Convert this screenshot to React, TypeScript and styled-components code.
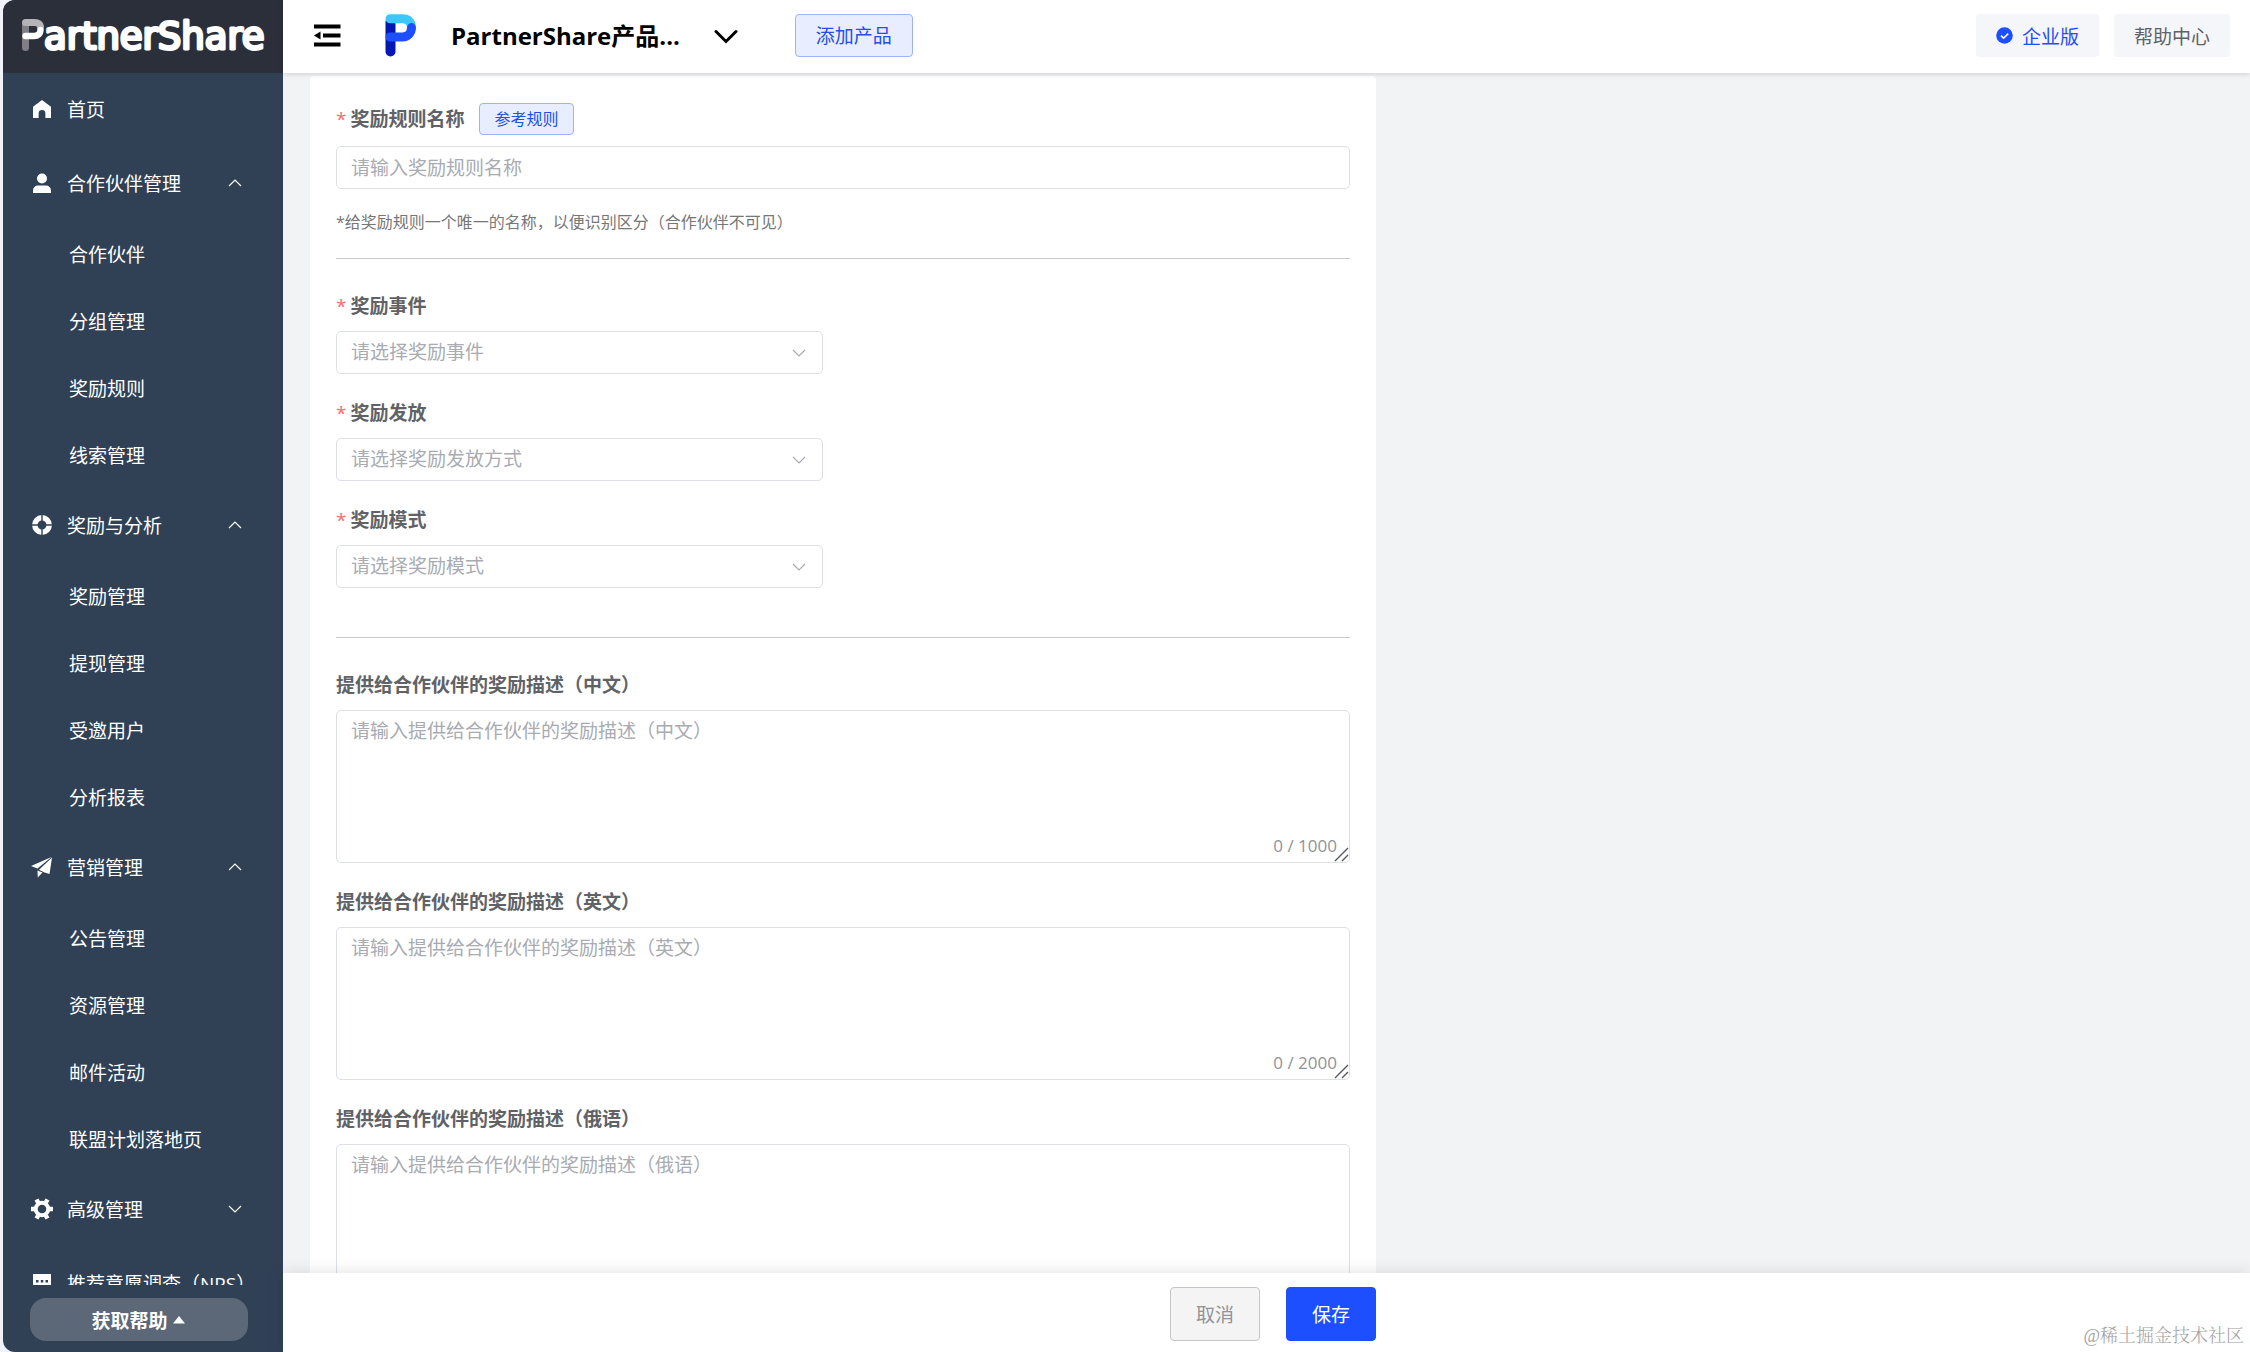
import React from 'react';
import styled, { createGlobalStyle } from 'styled-components';

const GlobalStyle = createGlobalStyle`
  * { box-sizing: border-box; }
  body {
    margin: 0;
    background: #eff3f9;
    font-family: "Open Sans", "Noto Sans CJK SC", sans-serif;
    font-size: 19px;
    color: #606266;
  }
  button, input, select, textarea { font: inherit; }
  svg { flex: none; }
`;

const Shell = styled.div`
  display: flex;
  height: 100vh;
  padding-left: 3px;
  overflow: hidden;
`;

/* ---------- sidebar ---------- */

const Sidebar = styled.aside`
  display: flex;
  flex: none;
  flex-direction: column;
  width: 280px;
  overflow: hidden;
  background: #304156;
  border-radius: 12px 0 0 12px;
`;

const Brand = styled.div`
  display: flex;
  flex: none;
  align-items: center;
  height: 73px;
  padding-left: 18px;
  background: #2b2f3a;
`;

const Menu = styled.nav`
  flex: 1;
  min-height: 0;
  overflow: hidden;
`;

const MenuItem = styled.button`
  display: flex;
  align-items: center;
  gap: 14px;
  width: 100%;
  height: 74px;
  padding: 0 41px 2px 28px;
  border: 0;
  background: none;
  color: #fff;
  text-align: left;
  white-space: nowrap;
  cursor: pointer;
`;

const MenuLabel = styled.span`
  flex: 1;
`;

const SubItem = styled.a`
  display: flex;
  align-items: center;
  height: 67px;
  padding: 0 0 2px 66px;
  color: #fff;
  text-decoration: none;
`;

const SidebarFooter = styled.div`
  flex: none;
  padding: 13px 35px 11px 27px;
`;

const HelpButton = styled.button`
  display: flex;
  align-items: center;
  justify-content: center;
  gap: 5px;
  width: 100%;
  height: 43px;
  padding: 0 8px 0 6px;
  border: 0;
  border-radius: 16px;
  background: #5c6778;
  color: #fff;
  font-weight: 700;
  cursor: pointer;
`;

/* ---------- header ---------- */

const Page = styled.div`
  display: flex;
  flex: 1;
  flex-direction: column;
  min-width: 0;
  background: #f1f3f5;
`;

const Header = styled.header`
  z-index: 1;
  display: flex;
  flex: none;
  align-items: center;
  height: 73px;
  padding: 0 20px 2px 31px;
  background: #fff;
  box-shadow: 0 1px 5px rgba(0, 0, 0, 0.16);
`;

const IconButton = styled.button`
  display: flex;
  padding: 0;
  border: 0;
  background: none;
  color: #000;
  cursor: pointer;
`;

const Product = styled.div`
  display: flex;
  align-items: center;
  gap: 34px;
  margin: 0 57px 0 43px;
`;

const ProductName = styled.h1`
  margin: 0;
  color: #000;
  font-size: 24px;
  font-weight: 700;
  line-height: 32px;
  white-space: nowrap;
`;

const OutlineButton = styled.button<{ $small?: boolean }>`
  height: ${(p) => (p.$small ? 32 : 43)}px;
  padding: 0 ${(p) => (p.$small ? 14 : 20)}px;
  border: 1px solid #9db2f7;
  border-radius: 4px;
  background: #e8edff;
  color: #2250e6;
  font-size: ${(p) => (p.$small ? 16 : 19)}px;
  line-height: 24px;
  cursor: pointer;
`;

const HeaderActions = styled.div`
  display: flex;
  gap: 15px;
  margin-left: auto;
`;

const SoftButton = styled.button<{ $accent?: boolean }>`
  display: flex;
  align-items: center;
  gap: 9px;
  height: 43px;
  padding: 0 20px;
  border: 0;
  border-radius: 4px;
  background: #f5f6fa;
  color: ${(p) => (p.$accent ? '#1d4fff' : '#606266')};
  white-space: nowrap;
  cursor: pointer;
`;

/* ---------- form ---------- */

const Content = styled.main`
  flex: 1;
  min-height: 0;
  padding: 3px 27px 0;
  overflow: hidden;
`;

const Card = styled.form`
  max-width: 1066px;
  padding: 27px 26px;
  border-radius: 4px;
  background: #fff;
`;

const Section = styled.section`
  display: flex;
  flex-direction: column;
  gap: 25px;
`;

const Field = styled.div`
  display: flex;
  flex-direction: column;
  gap: 11px;
`;

const LabelRow = styled.div`
  display: flex;
  align-items: center;
  gap: 15px;
`;

const Label = styled.label<{ $required?: boolean }>`
  font-weight: 700;
  line-height: 28px;

  &::before {
    content: ${(p) => (p.$required ? "'*'" : 'none')};
    margin-right: 4px;
    color: #f56c6c;
    font-weight: 400;
  }
`;

const TextInput = styled.input`
  width: 100%;
  height: 43px;
  padding: 0 14px;
  border: 1px solid #dcdfe6;
  border-radius: 5px;
  background: #fff;
  outline: none;

  &::placeholder { color: #a8abb2; opacity: 1; }
`;

const Hint = styled.p`
  margin: 10px 0 0;
  color: #777;
  font-size: 16px;
  line-height: 24px;
`;

const Divider = styled.hr<{ $wide?: boolean }>`
  width: 100%;
  height: 1px;
  margin: ${(p) => (p.$wide ? 49 : 24)}px 0 33px;
  border: 0;
  background: #c8c9cc;
`;

const SelectBox = styled.div`
  display: grid;
  align-items: center;
  width: 48%;

  > * { grid-area: 1 / 1; }
  > svg { justify-self: end; margin-right: 17px; pointer-events: none; color: #a8abb2; }
`;

const Select = styled.select`
  width: 100%;
  height: 43px;
  padding: 0 14px 2px;
  border: 1px solid #dcdfe6;
  border-radius: 5px;
  background: #fff;
  color: #a8abb2;
  appearance: none;
  outline: none;
`;

const AreaBox = styled.div`
  position: relative;
  display: flex;
`;

const TextArea = styled.textarea`
  width: 100%;
  height: 153px;
  padding: 6px 14px;
  border: 1px solid #dcdfe6;
  border-radius: 5px;
  background: #fff;
  line-height: 28px;
  resize: vertical;
  outline: none;

  &::placeholder { color: #a8abb2; opacity: 1; }
  &::-webkit-resizer { background: transparent; }
`;

const Grip = styled.svg`
  position: absolute;
  right: 1px;
  bottom: 1px;
  color: #55575c;
  pointer-events: none;
`;

const Counter = styled.span`
  position: absolute;
  right: 13px;
  bottom: 5px;
  color: #909399;
  font-size: 17px;
  line-height: 24px;
  pointer-events: none;
`;

const ActionBar = styled.footer`
  z-index: 1;
  flex: none;
  padding: 14px 27px 11px;
  background: #fff;
  box-shadow: 0 0 16px rgba(0, 0, 0, 0.12);
`;

const Actions = styled.div`
  display: flex;
  justify-content: flex-end;
  gap: 26px;
  max-width: 1066px;
`;

const ActionButton = styled.button<{ $primary?: boolean }>`
  width: 90px;
  height: 54px;
  border: 1px solid ${(p) => (p.$primary ? '#1d4fff' : '#c4c5c8')};
  border-radius: 4px;
  background: ${(p) => (p.$primary ? '#1d4fff' : '#f4f4f5')};
  color: ${(p) => (p.$primary ? '#fff' : '#909399')};
  cursor: pointer;
`;

const Watermark = styled.span`
  position: absolute;
  right: 6px;
  bottom: 4px;
  z-index: 2;
  color: #a2a2a2;
  font-family: "Liberation Serif", "Noto Serif CJK SC", "Noto Sans CJK SC", serif;
  font-size: 18px;
  font-weight: 300;
  line-height: 24px;
`;

/* ---------- icons ---------- */

const Chevron = ({ up, size = 14 }: { up?: boolean; size?: number }) => (
  <svg width={size} height={size} viewBox="0 0 14 14" fill="none" stroke="currentColor" strokeWidth="1.2">
    <path d={up ? 'M1 10 7 4l6 6' : 'M1 4l6 6 6-6'} />
  </svg>
);

const HomeIcon = () => (
  <svg width="22" height="22" viewBox="0 0 22 22" fill="#fff">
    <path d="M11 2 2 8.8V20h5.600v-4.500a3.400 3.400 0 0 1 6.800 0V20H20V8.800z" />
  </svg>
);

const UserIcon = () => (
  <svg width="22" height="22" viewBox="0 0 22 22" fill="#fff">
    <circle cx="11" cy="6.500" r="5" />
    <path d="M2 21v-2.500a5 5 0 0 1 5-5h8a5 5 0 0 1 5 5V21z" />
  </svg>
);

const RingIcon = () => (
  <svg width="22" height="22" viewBox="0 0 22 22" fill="none">
    <circle cx="11" cy="11" r="7.200" stroke="#fff" strokeWidth="5.500" />
    <path d="M11 0v7M11 15v7M0 11h7M15 11h7" stroke="#304156" strokeWidth="1.400" />
  </svg>
);

const PlaneIcon = () => (
  <svg width="22" height="22" viewBox="0 0 22 22" fill="#fff">
    <path d="M0 10 20.500 1 6.500 12.500z" />
    <path d="M21 1.500l-2.500 16.500-5-1.500-5.500-2.800z" />
    <path d="M6.500 14.500l5 2-4.700 5z" />
  </svg>
);

const GearIcon = () => (
  <svg width="22" height="22" viewBox="0 0 22 22" fill="none">
    <circle cx="11" cy="11" r="6.300" stroke="#fff" strokeWidth="4" />
    <path
      d="M3.500 11H0M22 11h-3.500M7.200 4.500 5.500 1.500M14.800 4.500l1.700-3M7.200 17.500l-1.700 3M14.800 17.500l1.700 3"
      stroke="#fff"
      strokeWidth="4.500"
    />
  </svg>
);

const SurveyIcon = () => (
  <svg width="22" height="22" viewBox="0 0 22 22">
    <path d="M2 2h18v15h-7l-3 4-3-4H2z" fill="#fff" />
    <path d="M5 8h2.500v2.500H5zM9.800 8h2.500v2.500H9.800zM14.500 8H17v2.500h-2.500z" fill="#304156" />
  </svg>
);

const CollapseIcon = () => (
  <svg width="28" height="24" viewBox="0 0 28 24" fill="#000">
    <path d="M0 0.500h26.500v4H0zM9 9.500h17.500v4H9zM0 18.500h26.500v4H0zM6.500 7.500v8L0 11.500z" />
  </svg>
);

const ProductMark = () => (
  <svg width="32" height="43" viewBox="0 0 32 43" fill="none" strokeLinecap="round" strokeWidth="10">
    <path d="M5.500 8v29.500" stroke="#0217b3" />
    <path d="M5 4.800h12.500c4.500 0 7.500 2 8.700 6.200" stroke="#3dc8fd" strokeWidth="9" />
    <path d="M5 23h12.500c5 0 9-4 9-9.400" stroke="#1d4fff" strokeWidth="9" />
  </svg>
);

const BrandMark = () => (
  <svg width="256" height="73" viewBox="0 0 256 73" fill="none" role="img" aria-label="PartnerShare">
    <g strokeLinecap="round" strokeWidth="7">
      <path d="M4.500 25v22.500" stroke="#807f88" />
      <path d="M4.500 22.500h9c4 0 5.500 1.500 6 4" stroke="#b4b4b8" />
      <path d="M4.500 36h8.500c4 0 6.500-2.500 6.500-6" stroke="#fff" strokeWidth="6.500" />
    </g>
    <text
      x="23"
      y="49"
      fill="#fff"
      stroke="#fff"
      strokeWidth="3"
      strokeLinejoin="round"
      fontFamily="'DejaVu Sans', sans-serif"
      fontSize="37"
    >
      artnerShare
    </text>
  </svg>
);

const CheckBadge = () => (
  <svg width="17" height="17" viewBox="0 0 17 17" fill="none">
    <circle cx="8.500" cy="8.500" r="8.300" fill="#1d4fff" />
    <path d="m5 8.700 2.600 2.500 4.600-4.600" stroke="#fff" strokeWidth="1.600" />
  </svg>
);

/* ---------- data ---------- */

type Group = { label: string; icon: React.ReactNode; open?: boolean; children?: string[] };

const groups: Group[] = [
  { label: '首页', icon: <HomeIcon /> },
  { label: '合作伙伴管理', icon: <UserIcon />, open: true, children: ['合作伙伴', '分组管理', '奖励规则', '线索管理'] },
  { label: '奖励与分析', icon: <RingIcon />, open: true, children: ['奖励管理', '提现管理', '受邀用户', '分析报表'] },
  { label: '营销管理', icon: <PlaneIcon />, open: true, children: ['公告管理', '资源管理', '邮件活动', '联盟计划落地页'] },
  { label: '高级管理', icon: <GearIcon />, children: [] },
  { label: '推荐意愿调查（NPS）', icon: <SurveyIcon /> },
];

const selects = [
  { id: 'event', label: '奖励事件', placeholder: '请选择奖励事件' },
  { id: 'payout', label: '奖励发放', placeholder: '请选择奖励发放方式' },
  { id: 'mode', label: '奖励模式', placeholder: '请选择奖励模式' },
];

const descriptions = [
  { id: 'desc-zh', lang: '中文', limit: 1000 },
  { id: 'desc-en', lang: '英文', limit: 2000 },
  { id: 'desc-ru', lang: '俄语', limit: 2000 },
];

export default function App() {
  return (
    <>
      <GlobalStyle />
      <Shell>
        <Sidebar>
          <Brand>
            <BrandMark />
          </Brand>
          <Menu>
            {groups.map((group) => (
              <div key={group.label}>
                <MenuItem type="button">
                  {group.icon}
                  <MenuLabel>{group.label}</MenuLabel>
                  {group.children && <Chevron up={group.open} />}
                </MenuItem>
                {group.children?.map((child) => (
                  <SubItem key={child} href="#">
                    {child}
                  </SubItem>
                ))}
              </div>
            ))}
          </Menu>
          <SidebarFooter>
            <HelpButton type="button">
              获取帮助
              <svg width="12" height="8" viewBox="0 0 12 8" fill="#fff">
                <path d="M6 0l6 7.500H0z" />
              </svg>
            </HelpButton>
          </SidebarFooter>
        </Sidebar>

        <Page>
          <Header>
            <IconButton type="button" aria-label="收起菜单">
              <CollapseIcon />
            </IconButton>
            <Product>
              <ProductMark />
              <ProductName>PartnerShare产品...</ProductName>
              <IconButton type="button" aria-label="切换产品">
                <svg
                  width="24"
                  height="16"
                  viewBox="0 0 24 16"
                  fill="none"
                  stroke="#000"
                  strokeWidth="3"
                  strokeLinecap="round"
                >
                  <path d="M2 3.500l10 10 10-10" />
                </svg>
              </IconButton>
            </Product>
            <OutlineButton type="button">添加产品</OutlineButton>
            <HeaderActions>
              <SoftButton type="button" $accent>
                <CheckBadge />
                企业版
              </SoftButton>
              <SoftButton type="button">帮助中心</SoftButton>
            </HeaderActions>
          </Header>

          <Content>
            <Card>
              <Field>
                <LabelRow>
                  <Label htmlFor="rule-name" $required>奖励规则名称</Label>
                  <OutlineButton type="button" $small>参考规则</OutlineButton>
                </LabelRow>
                <TextInput id="rule-name" placeholder="请输入奖励规则名称" />
                <Hint>*给奖励规则一个唯一的名称，以便识别区分（合作伙伴不可见）</Hint>
              </Field>
              <Divider />
              <Section>
                {selects.map((item) => (
                  <Field key={item.id}>
                    <Label htmlFor={item.id} $required>{item.label}</Label>
                    <SelectBox>
                      <Select id={item.id} defaultValue="">
                        <option value="">{item.placeholder}</option>
                      </Select>
                      <Chevron />
                    </SelectBox>
                  </Field>
                ))}
              </Section>
              <Divider $wide />
              <Section>
                {descriptions.map((item) => (
                  <Field key={item.id}>
                    <Label htmlFor={item.id}>提供给合作伙伴的奖励描述（{item.lang}）</Label>
                    <AreaBox>
                      <TextArea id={item.id} placeholder={`请输入提供给合作伙伴的奖励描述（${item.lang}）`} />
                      <Counter>0 / {item.limit}</Counter>
                      <Grip width="15" height="15" viewBox="0 0 15 15" fill="none" stroke="currentColor" strokeWidth="1.400">
                        <path d="M1 14 14 1M8 14l6-6" />
                      </Grip>
                    </AreaBox>
                  </Field>
                ))}
              </Section>
            </Card>
          </Content>

          <ActionBar>
            <Actions>
              <ActionButton type="button">取消</ActionButton>
              <ActionButton type="button" $primary>保存</ActionButton>
            </Actions>
          </ActionBar>
        </Page>
      </Shell>
      <Watermark>@稀土掘金技术社区</Watermark>
    </>
  );
}
